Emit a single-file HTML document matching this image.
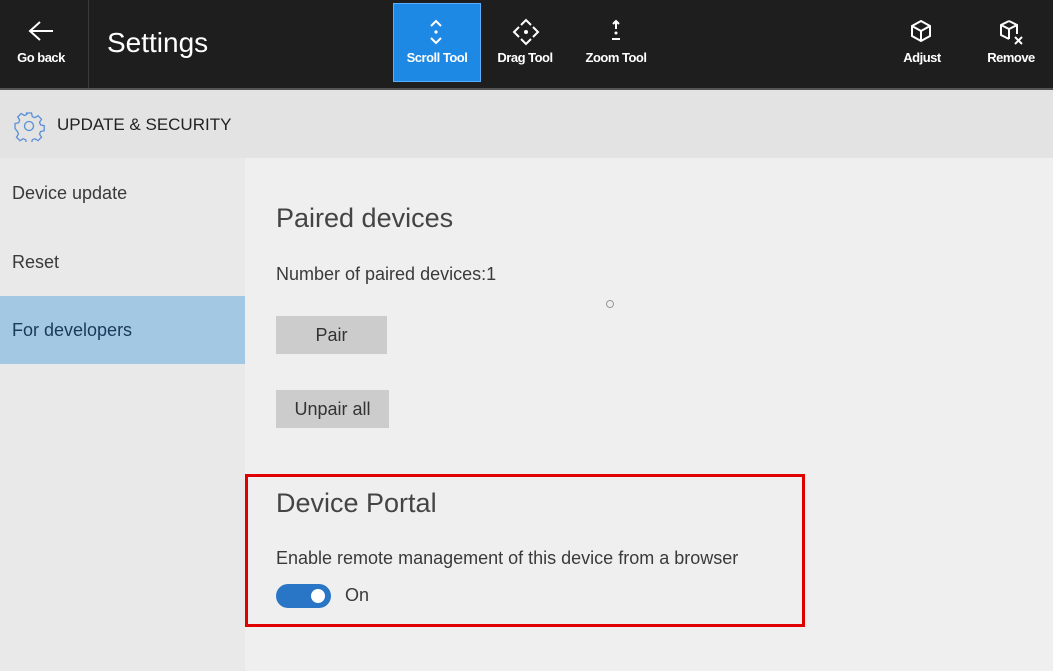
<!DOCTYPE html>
<html><head><meta charset="utf-8"><style>
*{margin:0;padding:0;box-sizing:border-box}
body{width:1053px;height:671px;overflow:hidden;background:#efefef;font-family:"Liberation Sans",sans-serif;position:relative}
.top{position:absolute;left:0;top:0;width:1053px;height:88px;background:#1e1e1e}
.sep{position:absolute;left:88px;top:0;width:1px;height:88px;background:#3a3a3a}
.lbl{position:absolute;color:#fff;font-size:13px;font-weight:bold;text-align:center;letter-spacing:-0.5px}
.hdr{position:absolute;left:0;top:88px;width:1053px;height:70px;background:#e3e3e3;border-top:2px solid #555}
.side{position:absolute;left:0;top:158px;width:245px;height:513px;background:#e9e9e9}
.t{position:absolute;color:#3a3a3a;font-size:18px}
.btn{position:absolute;background:#cccccc;color:#333;font-size:18px;text-align:center}
</style></head><body>
<div class="top">
 <svg style="position:absolute;left:27px;top:20px" width="28" height="22" viewBox="0 0 28 22"><path d="M13 2 L3 11 L13 20 M3 11 H26" stroke="#fff" stroke-width="2" fill="none"/></svg>
 <div class="lbl" style="left:0;width:82px;top:50px">Go back</div>
 <div class="sep"></div>
 <div style="position:absolute;left:107px;top:27px;color:#fff;font-size:28px">Settings</div>
 <div style="position:absolute;left:393px;top:3px;width:88px;height:79px;background:#1e88e5;border:1px solid #5ab0ff"></div>
 <svg style="position:absolute;left:426px;top:18px" width="20" height="28" viewBox="0 0 20 28"><path d="M5 8 L10 3 L15 8 M5 20 L10 25 L15 20" stroke="#fff" stroke-width="2" fill="none"/><circle cx="10" cy="14" r="1.6" fill="#fff"/></svg>
 <div class="lbl" style="left:393px;width:88px;top:50px">Scroll Tool</div>
 <svg style="position:absolute;left:512px;top:18px" width="28" height="28" viewBox="0 0 28 28"><path d="M9 7 L14 2 L19 7 M9 21 L14 26 L19 21 M7 9 L2 14 L7 19 M21 9 L26 14 L21 19" stroke="#fff" stroke-width="2" fill="none"/><circle cx="14" cy="14" r="2" fill="#fff"/></svg>
 <div class="lbl" style="left:485px;width:80px;top:50px">Drag Tool</div>
 <svg style="position:absolute;left:606px;top:18px" width="20" height="26" viewBox="0 0 20 26"><path d="M10 3 V11 M7 6 L10 3 L13 6 M6 21 H14" stroke="#fff" stroke-width="2" fill="none"/><circle cx="10" cy="15" r="1.5" fill="#fff"/></svg>
 <div class="lbl" style="left:575px;width:82px;top:50px">Zoom Tool</div>
 <svg style="position:absolute;left:908px;top:18px" width="26" height="26" viewBox="0 0 26 26"><path d="M13 3 L22 8 V18 L13 23 L4 18 V8 Z M4 8 L13 13 L22 8 M13 13 V23" stroke="#fff" stroke-width="2" fill="none"/></svg>
 <div class="lbl" style="left:890px;width:64px;top:50px">Adjust</div>
 <svg style="position:absolute;left:997px;top:18px" width="28" height="28" viewBox="0 0 28 28"><path d="M12 3 L20 7 V16 M12 3 L4 7 V17 L12 21 M4 7 L12 11 L20 7 M12 11 V21 M18 19 L25 26 M25 19 L18 26" stroke="#fff" stroke-width="2" fill="none"/></svg>
 <div class="lbl" style="left:978px;width:66px;top:50px">Remove</div>
</div>
<div class="hdr">
 <svg style="position:absolute;left:13px;top:20px" width="32" height="32" viewBox="0 0 32 32"><path d="M13.5 3h5l.8 3.6 2.6 1.1 3.1-2 3.5 3.5-2 3.1 1.1 2.6 3.6.8v5l-3.6.8-1.1 2.6 2 3.1-3.5 3.5-3.1-2-2.6 1.1-.8 3.6h-5l-.8-3.6-2.6-1.1-3.1 2-3.5-3.5 2-3.1-1.1-2.6L2 18.5v-5l3.6-.8 1.1-2.6-2-3.1 3.5-3.5 3.1 2 2.6-1.1z" stroke="#5a8fd6" stroke-width="1.3" fill="none"/><circle cx="16" cy="16" r="4.5" stroke="#5a8fd6" stroke-width="1.3" fill="none"/></svg>
 <div style="position:absolute;left:57px;top:25px;font-size:17px;color:#222">UPDATE &amp; SECURITY</div>
</div>
<div class="side">
 <div class="t" style="left:12px;top:25px">Device update</div>
 <div class="t" style="left:12px;top:94px">Reset</div>
 <div style="position:absolute;left:0;top:138px;width:245px;height:68px;background:#a3c8e4"></div>
 <div class="t" style="left:12px;top:162px;color:#1a3a5a">For developers</div>
</div>
<div class="t" style="left:276px;top:203px;font-size:27px;color:#444">Paired devices</div>
<div class="t" style="left:276px;top:264px">Number of paired devices:1</div>
<div style="position:absolute;left:606px;top:300px;width:8px;height:8px;border:1px solid #999;border-radius:50%"></div>
<div class="btn" style="left:276px;top:316px;width:111px;height:38px;line-height:38px">Pair</div>
<div class="btn" style="left:276px;top:390px;width:113px;height:38px;line-height:38px">Unpair all</div>
<div style="position:absolute;left:245px;top:474px;width:560px;height:153px;border:3px solid #e00000"></div>
<div class="t" style="left:276px;top:488px;font-size:27px;color:#444">Device Portal</div>
<div class="t" style="left:276px;top:548px">Enable remote management of this device from a browser</div>
<div style="position:absolute;left:276px;top:584px;width:55px;height:24px;border-radius:12px;background:#2a76c6"></div>
<div style="position:absolute;left:311px;top:589px;width:14px;height:14px;border-radius:50%;background:#fff"></div>
<div class="t" style="left:345px;top:585px">On</div>
</body></html>
